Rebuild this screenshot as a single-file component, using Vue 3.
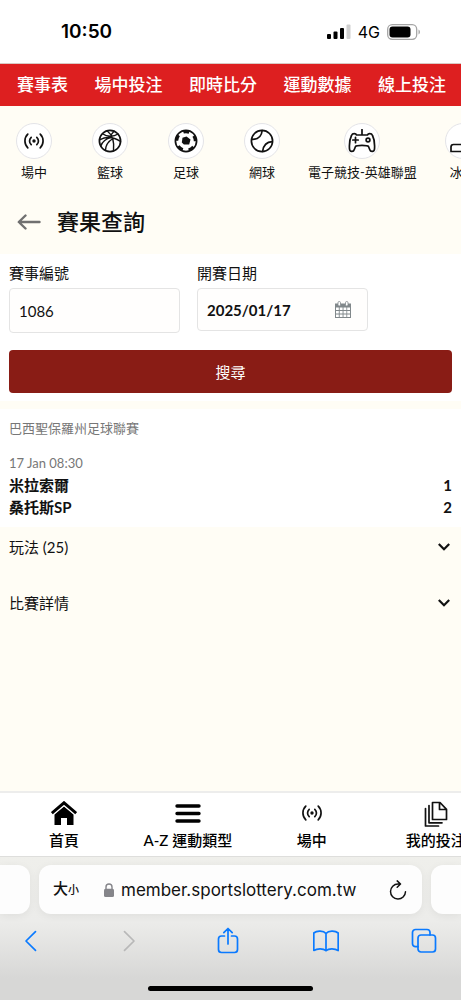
<script setup>
import { ref } from 'vue'

const mainLinks = ['賽事表', '場中投注', '即時比分', '運動數據', '線上投注']
const sports = [
  { icon: 'live', label: '場中' },
  { icon: 'basketball', label: '籃球' },
  { icon: 'soccer', label: '足球' },
  { icon: 'tennis', label: '網球' },
  { icon: 'esports', label: '電子競技-英雄聯盟' },
  { icon: 'hockey', label: '冰球' }
]
const teams = [
  { name: '米拉索爾', score: 1 },
  { name: '桑托斯SP', score: 2 }
]
const sections = ['玩法 (25)', '比賽詳情']
const tabs = [
  { icon: 'home', label: '首頁' },
  { icon: 'menu', label: 'A-Z 運動類型' },
  { icon: 'live', label: '場中' },
  { icon: 'bets', label: '我的投注' }
]
const eventNo = ref('1086')
const eventDate = ref('2025/01/17')
const address = ref('member.sportslottery.com.tw')
</script>

<template>
  <div class="screen">
    <div class="status">
      <span class="clock">10:50</span>
      <span class="signals">
        <svg class="bars" viewBox="0 0 24 15" width="24" height="15">
          <rect x="0" y="10" width="4" height="5" rx="1" />
          <rect x="6.5" y="7.5" width="4" height="7.5" rx="1" />
          <rect x="13" y="4" width="4" height="11" rx="1" />
          <rect x="19.5" y="0.5" width="4" height="14.5" rx="1" fill="#cfcfcf" />
        </svg>
        <span class="network">4G</span>
        <svg viewBox="0 0 34 16" width="34" height="16">
          <rect x="0.7" y="0.7" width="29" height="14.6" rx="4.5" fill="none" stroke="#a5a5a5" stroke-width="1.3" />
          <rect x="2.5" y="2.5" width="21" height="11" rx="3" />
          <path d="M31.5 5.5v5c2-1 2-4 0-5z" fill="#a5a5a5" />
        </svg>
      </span>
    </div>

    <nav class="main-nav">
      <a v-for="link in mainLinks" :key="link" href="#">{{ link }}</a>
    </nav>

    <nav class="sports">
      <a v-for="s in sports" :key="s.label" href="#" class="sport">
        <span class="disc">
          <svg v-if="s.icon === 'live'" viewBox="0 0 24 24" width="24" height="24" class="line">
            <circle cx="12" cy="12" r="1.7" fill="#111" stroke="none" />
            <path d="M9.2 8.3a5 5 0 0 0 0 7.4M14.8 8.3a5 5 0 0 1 0 7.4M5.8 5.2a9.500 9.500 0 0 0 0 13.6M18.2 5.2a9.5 9.5 0 0 1 0 13.6" />
          </svg>
          <svg v-else-if="s.icon === 'basketball'" viewBox="0 0 24 24" width="24" height="24" class="line">
            <circle cx="12" cy="12" r="10.6" />
            <path stroke-width="1.4" d="M1.500 10.800C8 7.500 16 8 22.500 12.500M4.500 4.800C9 8 15.500 8 20 5M9 1.800C14 5.500 16.500 13 15.500 22M16 2.200C13.500 4.500 12.600 6.500 12.500 8.500M2.800 17C4.500 12.500 8 9.500 13 8.600M7.500 21.500C7.500 17 10 12.500 15 9.500" />
          </svg>
          <svg v-else-if="s.icon === 'soccer'" viewBox="0 0 24 24" width="24" height="24" class="line">
            <circle cx="12" cy="12" r="10.6" />
            <circle cx="12" cy="12" r="9.3" pathLength="50" stroke-width="3" stroke-dasharray="5 5" stroke-linecap="butt" transform="rotate(-34 12 12)" />
            <path fill="#111" stroke="none" d="M12.500 7.600l4 2.900-1.300 5.100H9.900L7.800 13.500l.7-4.700z" />
          </svg>
          <svg v-else-if="s.icon === 'tennis'" viewBox="0 0 24 24" width="24" height="24" class="line">
            <circle cx="12" cy="12" r="10.6" />
            <path d="M12.200 1.500C11.500 7.500 8 10.700 1.800 10.300M22.200 12.700C16.500 13 13.500 16 12.600 22.300" />
          </svg>
          <svg v-else-if="s.icon === 'esports'" viewBox="0 0 28 24" width="28" height="24" class="line">
            <path d="M14 .5V6M8.500 6h11C20 4.300 23.500 4 24.500 6.500c1.600 3 2.300 9 2 13.500-.2 3-4 3.300-4.800.5L20.500 17.500C19.500 16 8.500 16 7.500 17.500L6.300 20.500c-.8 2.800-4.600 2.500-4.800-.5-.3-4.500.4-10.500 2-13.500C4.500 4 8 4.300 8.500 6zM4.800 11h5.400M7.500 8.300v5.400" />
            <circle cx="20" cy="11" r="1.900" />
          </svg>
          <svg v-else viewBox="0 0 28 24" width="28" height="24" class="line">
            <path d="M2 22.500V18c0-1.500 1-2.500 2.500-2.500H15L20 4h6v18.500z" />
          </svg>
        </span>
        <span>{{ s.label }}</span>
      </a>
    </nav>

    <header class="title">
      <button type="button" class="plain" aria-label="返回">
        <svg viewBox="0 0 24 16" width="24" height="16" fill="none" stroke="#707070" stroke-width="2.4" stroke-linecap="round" stroke-linejoin="round">
          <path d="M22.500 8H2M8.500 1.500L1.800 8l6.700 6.500" />
        </svg>
      </button>
      <h1>賽果查詢</h1>
    </header>

    <form class="search" @submit.prevent>
      <div class="fields">
        <div class="field">
          <label for="event-no">賽事編號</label>
          <input id="event-no" v-model="eventNo" type="text" />
        </div>
        <div class="field">
          <label for="event-date">開賽日期</label>
          <div class="date-box">
            <input id="event-date" v-model="eventDate" type="text" />
            <button type="button" class="plain" aria-label="選擇日期">
              <svg viewBox="0 0 16 17" width="16" height="17">
                <path fill="#81888b" d="M0 2.500h16V17H0z" />
                <path fill="#fff" d="M1 6.500h2.800v2.600H1zM4.700 6.500h2.900v2.600H4.700zM8.500 6.500h2.900v2.600H8.500zM12.200 6.500H15v2.600h-2.800zM1 10h2.800v2.600H1zM4.700 10h2.900v2.600H4.700zM8.500 10h2.900v2.600H8.500zM12.200 10H15v2.600h-2.800zM1 13.500h2.800V16H1zM4.700 13.500h2.900V16H4.700zM8.500 13.500h2.900V16H8.500zM12.200 13.500H15V16h-2.800z" />
                <rect x="3" y=".5" width="2.5" height="4.5" rx="1.2" fill="#fff" stroke="#81888b" stroke-width=".8" />
                <rect x="10.5" y=".5" width="2.5" height="4.5" rx="1.2" fill="#fff" stroke="#81888b" stroke-width=".8" />
              </svg>
            </button>
          </div>
        </div>
      </div>
      <button type="submit" class="submit">搜尋</button>
    </form>

    <section class="result">
      <p class="league">巴西聖保羅州足球聯賽</p>
      <p class="time">17 Jan 08:30</p>
      <div v-for="t in teams" :key="t.name" class="team">
        <span>{{ t.name }}</span>
        <span>{{ t.score }}</span>
      </div>
    </section>

    <button v-for="s in sections" :key="s" type="button" class="section">
      <span>{{ s }}</span>
      <svg viewBox="0 0 12 8" width="12" height="8" fill="none" stroke="#111" stroke-width="2.2">
        <path d="M.8 1L6 6.200 11.200 1" />
      </svg>
    </button>

    <footer class="bottom">
      <nav class="tabs">
        <a v-for="t in tabs" :key="t.label" href="#" class="tab">
          <svg v-if="t.icon === 'home'" viewBox="0 0 26 24" width="26" height="24">
            <path d="M3.500 13.500L13 5.500l9.500 8V24H16v-7h-6v7H3.500z" />
            <path d="M.8 12.200L13 1.800l12.200 10.400" fill="none" stroke="#fff" stroke-width="5" />
            <path d="M.8 12.200L13 1.800l12.200 10.400" fill="none" stroke="#000" stroke-width="3" />
          </svg>
          <svg v-else-if="t.icon === 'menu'" viewBox="0 0 26 24" width="26" height="24" fill="none" stroke="#000" stroke-width="3.4" stroke-linecap="round">
            <path d="M2 5h22M2 12.500h22M2 20h22" />
          </svg>
          <svg v-else-if="t.icon === 'live'" viewBox="0 0 24 24" width="24" height="24" class="line">
            <circle cx="12" cy="12" r="1.7" fill="#111" stroke="none" />
            <path d="M9.2 8.3a5 5 0 0 0 0 7.4M14.8 8.3a5 5 0 0 1 0 7.4M5.8 5.2a9.5 9.5 0 0 0 0 13.6M18.2 5.2a9.5 9.5 0 0 1 0 13.6" />
          </svg>
          <svg v-else viewBox="0 0 24 26" width="24" height="26" class="line">
            <path d="M8.500 1.500h7.500l6.500 6.800v10.200h-14zM15.500 1.500v7h7M5 4.500v17.300h13M1.500 7.500V25H14.500" />
          </svg>
          <span>{{ t.label }}</span>
        </a>
      </nav>

      <div class="browser">
        <div class="address-row">
          <div class="peek left"></div>
          <div class="address">
            <button type="button" class="plain text-size" aria-label="文字大小">大<small>小</small></button>
            <svg class="lock" viewBox="0 0 10 14" width="10" height="14">
              <rect y="5.8" width="10" height="8.2" rx="1.5" fill="#85858a" />
              <path d="M2 6.500V4a3 3 0 0 1 6 0v2.500" fill="none" stroke="#85858a" stroke-width="1.4" />
            </svg>
            <input v-model="address" type="text" aria-label="網址" />
            <button type="button" class="plain" aria-label="重新載入">
              <svg viewBox="0 0 18 20" width="18" height="20" fill="none" stroke="#111" stroke-width="1.5" stroke-linecap="round" stroke-linejoin="round">
                <path d="M10.500 4H9a7.500 7.500 0 1 0 7.500 7.800M8.200 .9L11.500 4 8.200 7.300" />
              </svg>
            </button>
          </div>
          <div class="peek right"></div>
        </div>
        <div class="tools">
          <button type="button" class="plain" aria-label="上一頁">
            <svg viewBox="0 0 26 26" width="26" height="26"><path d="M17.500 3.700L8 13l9.500 9.300" /></svg>
          </button>
          <button type="button" class="plain off" aria-label="下一頁">
            <svg viewBox="0 0 26 26" width="26" height="26"><path d="M8.500 3.700L18 13l-9.500 9.300" /></svg>
          </button>
          <button type="button" class="plain" aria-label="分享">
            <svg viewBox="0 0 26 28" width="26" height="28"><path d="M9.500 9H6.500A3 3 0 0 0 3.500 12v10.500a3 3 0 0 0 3 3h13a3 3 0 0 0 3-3V12a3 3 0 0 0-3-3h-3M13 17V1.800M8.800 5.700L13 1.500l4.200 4.200" /></svg>
          </button>
          <button type="button" class="plain" aria-label="書籤">
            <svg viewBox="0 0 26 26" width="26" height="26"><path d="M13 5.500C10.500 2.500 4 2.200.8 5v17.500c3.500-2.300 9.500-2.300 12.200.2 2.700-2.500 8.700-2.500 12.200-.2V5C22 2.200 15.500 2.500 13 5.500zV22.700" /></svg>
          </button>
          <button type="button" class="plain" aria-label="分頁">
            <svg viewBox="0 0 26 26" width="26" height="26"><rect x="7" y="7" width="17.5" height="17" rx="3" /><path d="M7 18.700H4.500a3 3 0 0 1-3-3V4.500a3 3 0 0 1 3-3H16a3 3 0 0 1 3 3V7" /></svg>
          </button>
        </div>
        <div class="home-bar"></div>
      </div>
    </footer>
  </div>
</template>

<style>
html,
body {
  margin: 0;
  overflow-x: hidden;
}
</style>

<style scoped>
.screen,
.screen * {
  box-sizing: border-box;
}
.screen {
  display: flex;
  flex-direction: column;
  min-height: 100vh;
  overflow: hidden;
  background: #fffdf5;
  color: #111;
  font-family: Lato, "Noto Sans CJK TC", sans-serif;
  font-size: 15px;
  line-height: 22px;
}
svg {
  display: block;
  flex: none;
}
a {
  color: inherit;
  text-decoration: none;
}
h1,
p {
  margin: 0;
}
input {
  min-width: 0;
  color: inherit;
  font: inherit;
}
.plain {
  padding: 0;
  border: 0;
  background: none;
  color: inherit;
  font: inherit;
}
.line {
  fill: none;
  stroke: #111;
  stroke-width: 1.7;
  stroke-linecap: round;
  stroke-linejoin: round;
}
.status {
  display: flex;
  align-items: center;
  justify-content: space-between;
  height: 64px;
  padding: 0 40px 0 61px;
  border-bottom: 1px solid #d9c9c4;
  background: #fff;
  color: #000;
  font-family: Inter, sans-serif;
}
.clock {
  font-size: 19px;
  font-weight: 600;
}
.signals {
  display: flex;
  align-items: center;
  gap: 7px;
}
.network {
  font-size: 16px;
}
.main-nav {
  display: flex;
  justify-content: space-between;
  padding: 9px 15px 9px 17px;
  background: #dd1f20;
  color: #fff;
  font-size: 17px;
  font-weight: 500;
  line-height: 24px;
  white-space: nowrap;
}
.sports {
  display: flex;
  gap: 16px;
  padding: 17px 4px 0;
  font-size: 13px;
  line-height: 20px;
  white-space: nowrap;
}
.sport {
  display: flex;
  flex: none;
  flex-direction: column;
  align-items: center;
  gap: 3px;
  min-width: 60px;
}
.disc {
  display: flex;
  align-items: center;
  justify-content: center;
  width: 36px;
  height: 36px;
  border: 1px solid #e4e4e8;
  border-radius: 50%;
  background: #fff;
}
.title {
  display: flex;
  align-items: center;
  gap: 16px;
  padding: 24px 17px 16px;
}
h1 {
  font-size: 22px;
  font-weight: 500;
  line-height: 32px;
}
.search {
  padding: 8px 9px;
  border-bottom: 8px solid #fffdf5;
  background: #fff;
}
.fields {
  display: flex;
  align-items: flex-start;
  gap: 17px;
  margin-bottom: 17px;
}
.field {
  display: flex;
  flex-direction: column;
  gap: 4px;
  width: 171px;
}
.field > input,
.date-box {
  width: 100%;
  height: 45px;
  padding: 0 9px;
  border: 1px solid #e4e4e4;
  border-radius: 4px;
  background: #fffefd;
}
.date-box {
  display: flex;
  align-items: center;
  height: 43px;
  padding-right: 16px;
  font-weight: 700;
}
.date-box input {
  flex: 1;
  padding: 0;
  border: 0;
  background: none;
}
.submit {
  display: block;
  width: 100%;
  height: 43px;
  border: 0;
  border-radius: 4px;
  background: #891c15;
  color: #fff;
  font: inherit;
}
.result {
  padding: 8px 9px 9px;
  background: #fff;
}
.league,
.time {
  color: #777;
  font-size: 13px;
}
.league {
  margin-bottom: 13px;
}
.team {
  display: flex;
  justify-content: space-between;
  font-weight: 700;
}
.section {
  display: flex;
  align-items: center;
  justify-content: space-between;
  width: 100%;
  margin-bottom: 17px;
  padding: 9px 11px 8px 9px;
  border: 0;
  background: none;
  color: inherit;
  font: inherit;
}
.bottom {
  margin-top: auto;
}
.tabs {
  display: flex;
  height: 66px;
  padding: 8px 0 5px 2px;
  border-top: 2px solid #ededec;
  border-bottom: 1px solid #dededc;
  background: #fff;
  font-weight: 500;
  white-space: nowrap;
}
.tab {
  display: flex;
  flex: 0 0 27%;
  flex-direction: column;
  align-items: center;
  justify-content: space-between;
  color: #000;
}
.browser {
  padding: 8px 0 9px;
  background: linear-gradient(#efefeb, #ececea 45%, #d7d7d6 85%);
}
.address-row {
  display: flex;
  gap: 9px;
  height: 49px;
}
.peek,
.address {
  background: #fdfdfd;
  box-shadow: 0 2px 8px rgba(0, 0, 0, 0.06);
}
.peek {
  flex: none;
  width: 30px;
}
.left {
  border-radius: 0 12px 12px 0;
}
.right {
  border-radius: 12px 0 0 12px;
}
.address {
  display: flex;
  flex: 1;
  align-items: center;
  min-width: 0;
  padding: 0 15px 0 14px;
  border-radius: 12px;
  font-family: Inter, "Noto Sans CJK TC", sans-serif;
  font-size: 17px;
}
.text-size {
  font-size: 15px;
  font-weight: 500;
}
.text-size small {
  font-size: 11px;
}
.lock {
  margin: 0 7px 0 25px;
}
.address input {
  flex: 1;
  padding: 0;
  border: 0;
  background: none;
}
.tools {
  display: flex;
  align-items: center;
  justify-content: space-between;
  height: 54px;
  padding: 0 24px 0 18px;
}
.tools svg {
  fill: none;
  stroke: #0a7aff;
  stroke-width: 1.7;
  stroke-linecap: round;
  stroke-linejoin: round;
}
.tools .off svg {
  stroke: #b8b8b8;
}
.home-bar {
  width: 36%;
  height: 5px;
  margin: 18px auto 0;
  border-radius: 3px;
  background: #000;
}
</style>
